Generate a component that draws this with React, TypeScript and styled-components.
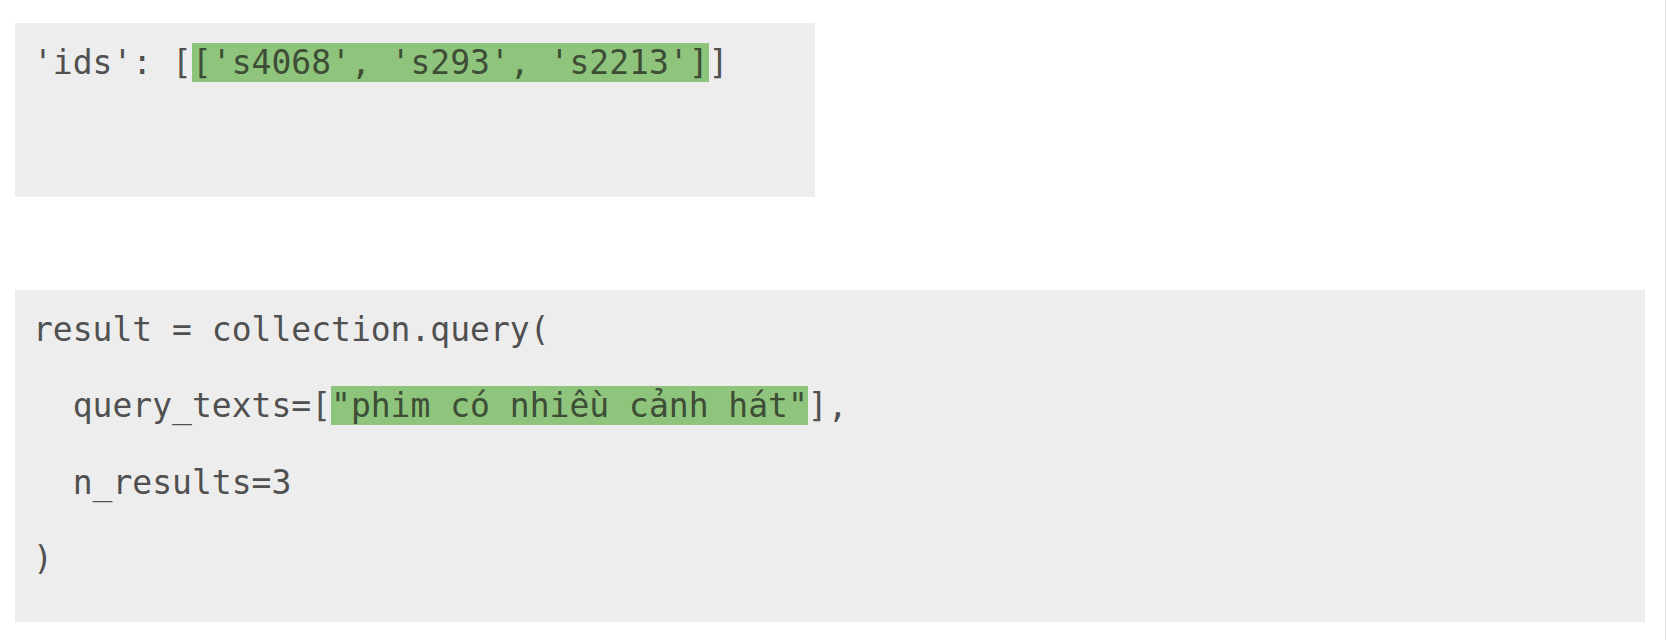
import React from "react";
import styled, { createGlobalStyle } from "styled-components";

const GlobalStyle = createGlobalStyle`
  html, body {
    margin: 0;
    padding: 0;
    background: #ffffff;
  }
  #root {
    min-height: 640px;
  }
`;

const Page = styled.div`
  display: flex;
  min-height: 640px;
  background: #ffffff;
`;

const Content = styled.main`
  flex: 1;
  display: flex;
  flex-direction: column;
  align-items: flex-start;
  gap: 93px;
  padding: 23px 20px 0 15px;
`;

const RightRule = styled.div`
  width: 1px;
  margin-right: 2px;
  background: #e2e2e2;
`;

const CodeBlock = styled.pre<{ $width?: string; $padBottom: number }>`
  margin: 0;
  box-sizing: border-box;
  width: ${(p) => p.$width ?? "100%"};
  align-self: ${(p) => (p.$width ? "flex-start" : "stretch")};
  padding: 2px 18px ${(p) => p.$padBottom}px 18px;
  background: #ededed;
  font-family: "DejaVu Sans Mono", "Liberation Mono", monospace;
  font-size: 33px;
  line-height: 76.4px;
  color: #505050;
  white-space: pre;
`;

const Line = styled.div`
  display: block;
  white-space: pre;
`;

const Mark = styled.span`
  background: #8ec47c;
  color: #3d4d36;
`;

export default function App() {
  return (
    <>
      <GlobalStyle />
      <Page>
        <Content>
          <CodeBlock $width="800px" $padBottom={95.6}>
            <Line>
              {"'ids': ["}
              <Mark>{"['s4068', 's293', 's2213']"}</Mark>
              {"]"}
            </Line>
          </CodeBlock>
          <CodeBlock $padBottom={24.4}>
            <Line>{"result = collection.query("}</Line>
            <Line>
              {"  query_texts=["}
              <Mark>{'"phim có nhiều cảnh hát"'}</Mark>
              {"],"}
            </Line>
            <Line>{"  n_results=3"}</Line>
            <Line>{")"}</Line>
          </CodeBlock>
        </Content>
        <RightRule />
      </Page>
    </>
  );
}
